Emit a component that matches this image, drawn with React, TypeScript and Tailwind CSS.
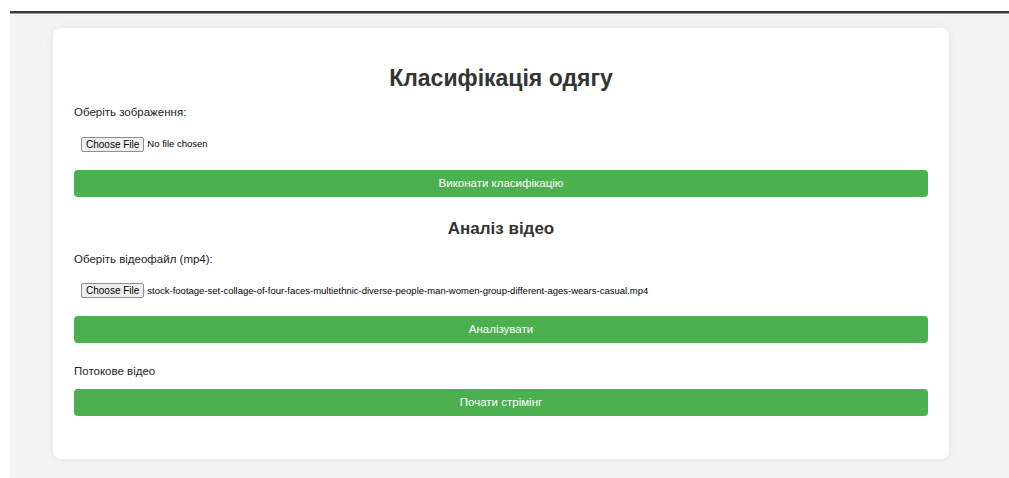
import React from 'react';

const FileField = ({ fileName }: { fileName: string }) => (
    <div className="flex items-center gap-[3px] pl-[7px] text-[9.5px] text-black">
        <span className="border border-[#8f8f8f] bg-[#efefef] rounded-[2px] px-[4px] h-[15px] leading-[13px] text-[10px]">Choose File</span>
        <span>{fileName}</span>
    </div>
);

const GreenButton = ({ children }: { children: React.ReactNode }) => (
    <button className="w-full h-[27px] rounded-[4px] bg-[#4caf50] text-white text-[11.5px]">
        {children}
    </button>
);

export default function App() {
    return (
        <div className="min-h-screen bg-white pt-[11px] pl-[10px]" style={{ fontFamily: '"Liberation Sans", Arial, sans-serif' }}>
            <div className="h-[3px] bg-[#3a3a3a] border-b border-[#9a9a9a]" />
            <div className="bg-[#f4f4f4] pt-[14px] pb-[20px] pl-[43px] pr-[60px] h-[464px]">
                <div className="bg-white rounded-[8px] shadow-[0_0_8px_rgba(0,0,0,0.08)] px-[21px] pt-[36px] pb-[43px] text-[#222]">
                    <h1 className="text-center text-[23px] font-bold text-[#333] leading-[28px]">Класифікація одягу</h1>

                    <p className="mt-[13px] text-[11.5px] leading-[14px]">Оберіть зображення:</p>
                    <div className="mt-[18px]">
                        <FileField fileName="No file chosen" />
                    </div>
                    <div className="mt-[18px]">
                        <GreenButton>Виконати класифікацію</GreenButton>
                    </div>

                    <h2 className="mt-[21px] text-center text-[17px] font-bold text-[#333] leading-[22px]">Аналіз відео</h2>
                    <p className="mt-[12px] text-[11.5px] leading-[14px]">Оберіть відеофайл (mp4):</p>
                    <div className="mt-[17px]">
                        <FileField fileName="stock-footage-set-collage-of-four-faces-multiethnic-diverse-people-man-women-group-different-ages-wears-casual.mp4" />
                    </div>
                    <div className="mt-[18px]">
                        <GreenButton>Аналізувати</GreenButton>
                    </div>

                    <p className="mt-[21px] text-[11.5px] leading-[14px]">Потокове відео</p>
                    <div className="mt-[11px]">
                        <GreenButton>Почати стрімінг</GreenButton>
                    </div>
                </div>
            </div>
        </div>
    );
}
